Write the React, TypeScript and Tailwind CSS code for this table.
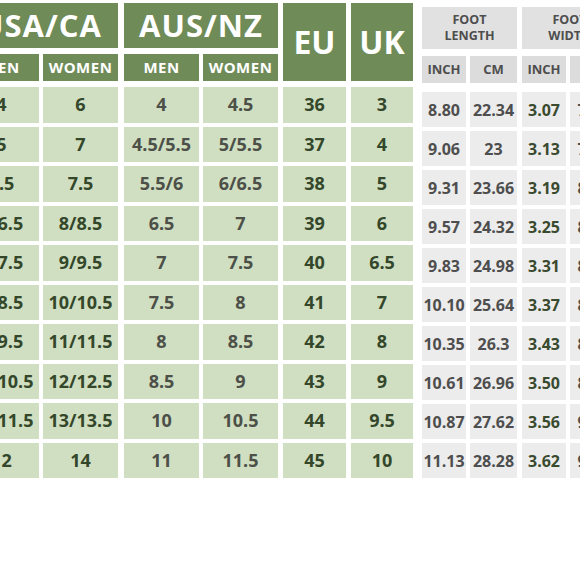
import React from "react";

const usaMen = ["4", "5", "5.5", "6/6.5", "7/7.5", "8/8.5", "9/9.5", "10/10.5", "11/11.5", "12"];
const usaWomen = ["6", "7", "7.5", "8/8.5", "9/9.5", "10/10.5", "11/11.5", "12/12.5", "13/13.5", "14"];
const ausMen = ["4", "4.5/5.5", "5.5/6", "6.5", "7", "7.5", "8", "8.5", "10", "11"];
const ausWomen = ["4.5", "5/5.5", "6/6.5", "7", "7.5", "8", "8.5", "9", "10.5", "11.5"];
const eu = ["36", "37", "38", "39", "40", "41", "42", "43", "44", "45"];
const uk = ["3", "4", "5", "6", "6.5", "7", "8", "9", "9.5", "10"];
const flIn = ["8.80", "9.06", "9.31", "9.57", "9.83", "10.10", "10.35", "10.61", "10.87", "11.13"];
const flCm = ["22.34", "23", "23.66", "24.32", "24.98", "25.64", "26.3", "26.96", "27.62", "28.28"];
const fwIn = ["3.07", "3.13", "3.19", "3.25", "3.31", "3.37", "3.43", "3.50", "3.56", "3.62"];
const fwCm = ["7.80", "7.95", "8.10", "8.26", "8.41", "8.56", "8.71", "8.89", "9.04", "9.19"];

const font = { fontFamily: '"Open Sans", "Liberation Sans", sans-serif' };

function GreenCol({ values, w, color }: { values: string[]; w: string; color: string }) {
  return (
    <div className="flex flex-col gap-[4px]">
      {values.map((v, i) => (
        <div
          key={i}
          className={`${w} h-[35.5px] bg-[#d0dfc2] flex items-center justify-center text-[18px] font-bold ${color}`}
        >
          {v}
        </div>
      ))}
    </div>
  );
}

function GrayCol({ values, w, color }: { values: string[]; w: string; color: string }) {
  return (
    <div className="flex flex-col gap-[4px]">
      {values.map((v, i) => (
        <div
          key={i}
          className={`${w} h-[35px] bg-[#ececec] flex items-center justify-center text-[16px] font-bold ${color}`}
        >
          {v}
        </div>
      ))}
    </div>
  );
}

function RegionGroup({
  title,
  men,
  women,
  menColor,
  womenColor,
}: {
  title: string;
  men: string[];
  women: string[];
  menColor: string;
  womenColor: string;
}) {
  return (
    <div className="flex flex-col pt-[3px] w-[154px]">
      <div className="h-[45px] bg-[#6f8b57] flex items-center justify-center text-white font-bold text-[31px] tracking-[1px]">
        {title}
      </div>
      <div className="mt-[6px] flex gap-[4px]">
        <div className="w-[75px] h-[27px] bg-[#6f8b57] flex items-center justify-center text-white font-bold text-[15px] tracking-[0.5px]">
          MEN
        </div>
        <div className="w-[75px] h-[27px] bg-[#6f8b57] flex items-center justify-center text-white font-bold text-[15px] tracking-[0.5px]">
          WOMEN
        </div>
      </div>
      <div className="mt-[6px] flex gap-[4px]">
        <GreenCol values={men} w="w-[75px]" color={menColor} />
        <GreenCol values={women} w="w-[75px]" color={womenColor} />
      </div>
    </div>
  );
}

function SingleGroup({ title, values, w }: { title: string; values: string[]; w: string }) {
  return (
    <div className="flex flex-col pt-[3px]">
      <div className={`${w} h-[78px] bg-[#6f8b57] flex items-center justify-center text-white font-bold text-[32px]`}>
        {title}
      </div>
      <div className="mt-[6px]">
        <GreenCol values={values} w={w} color="text-[#34472a]" />
      </div>
    </div>
  );
}

function FootGroup({
  l1,
  l2,
  inch,
  cm,
  inchColor,
  cmColor,
}: {
  l1: string;
  l2: string;
  inch: string[];
  cm: string[];
  inchColor: string;
  cmColor: string;
}) {
  return (
    <div className="flex flex-col pt-[7px] w-[95px]">
      <div className="h-[42px] bg-[#e1e1e1] flex flex-col items-center justify-center text-[#4e4e4e] font-bold text-[12.5px] leading-[16px]">
        <span>{l1}</span>
        <span>{l2}</span>
      </div>
      <div className="mt-[7px] flex gap-[4px]">
        <div className="w-[44px] h-[27px] bg-[#dcdcdc] flex items-center justify-center text-[#4e4e4e] font-bold text-[13px]">
          INCH
        </div>
        <div className="w-[47px] h-[27px] bg-[#dcdcdc] flex items-center justify-center text-[#4e4e4e] font-bold text-[13px]">
          CM
        </div>
      </div>
      <div className="mt-[9px] flex gap-[4px]">
        <GrayCol values={inch} w="w-[44px]" color={inchColor} />
        <GrayCol values={cm} w="w-[47px]" color={cmColor} />
      </div>
    </div>
  );
}

export default function App() {
  return (
    <div className="w-[580px] h-[580px] overflow-hidden bg-white" style={font}>
      <div className="flex items-start ml-[-36px] w-[700px]">
        <RegionGroup
          title="USA/CA"
          men={usaMen}
          women={usaWomen}
          menColor="text-[#34472a]"
          womenColor="text-[#34472a]"
        />
        <div className="ml-[6px]">
          <RegionGroup
            title="AUS/NZ"
            men={ausMen}
            women={ausWomen}
            menColor="text-[#4c5048]"
            womenColor="text-[#4c5048]"
          />
        </div>
        <div className="ml-[5px]">
          <SingleGroup title="EU" values={eu} w="w-[63px]" />
        </div>
        <div className="ml-[5px]">
          <SingleGroup title="UK" values={uk} w="w-[62px]" />
        </div>
        <div className="ml-[9px]">
          <FootGroup
            l1="FOOT"
            l2="LENGTH"
            inch={flIn}
            cm={flCm}
            inchColor="text-[#4e4e4e]"
            cmColor="text-[#4e4e4e]"
          />
        </div>
        <div className="ml-[5px]">
          <FootGroup
            l1="FOOT"
            l2="WIDTH"
            inch={fwIn}
            cm={fwCm}
            inchColor="text-[#3a4a2e]"
            cmColor="text-[#4e4e4e]"
          />
        </div>
      </div>
    </div>
  );
}
